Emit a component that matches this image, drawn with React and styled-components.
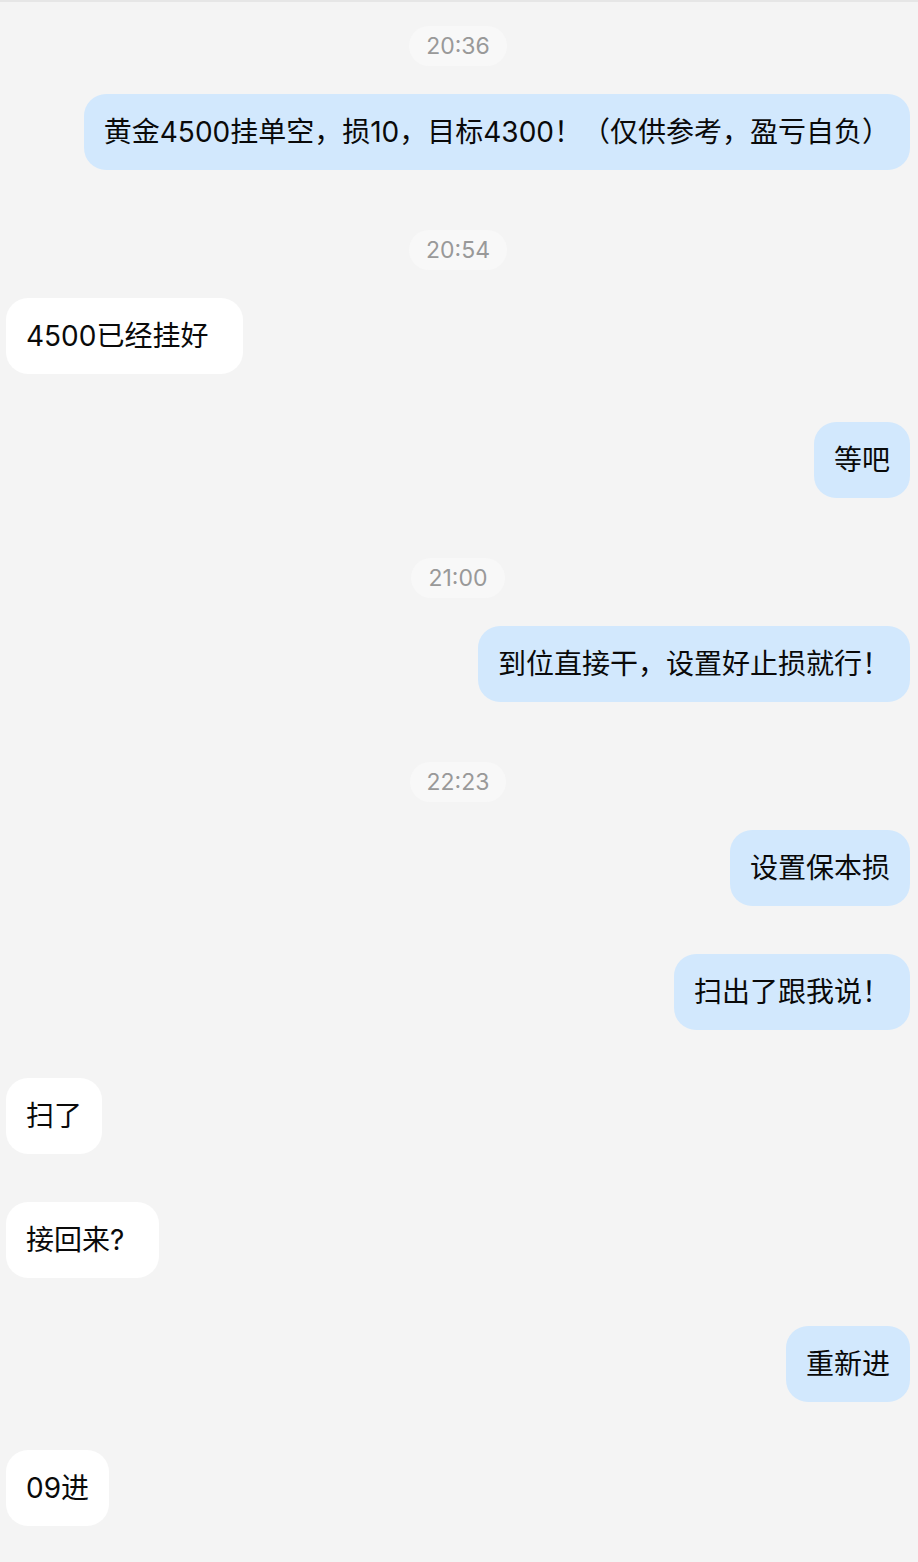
import React from "react";
import styled, { createGlobalStyle } from "styled-components";

const GlobalStyle = createGlobalStyle`
  html, body {
    margin: 0;
    padding: 0;
    background: #f4f4f4;
  }
  body {
    font-family: Inter, "Noto Sans CJK SC", "Noto Sans", sans-serif;
    -webkit-font-smoothing: antialiased;
  }
`;

// trailing: message text ended with extra blank space in the original
const messages = [
  { type: "time", text: "20:36" },
  { type: "msg", mine: true, text: "黄金4500挂单空，损10，目标4300！（仅供参考，盈亏自负）" },
  { type: "time", text: "20:54" },
  { type: "msg", mine: false, text: "4500已经挂好", trailing: true },
  { type: "msg", mine: true, text: "等吧" },
  { type: "time", text: "21:00" },
  { type: "msg", mine: true, text: "到位直接干，设置好止损就行！" },
  { type: "time", text: "22:23" },
  { type: "msg", mine: true, text: "设置保本损" },
  { type: "msg", mine: true, text: "扫出了跟我说！" },
  { type: "msg", mine: false, text: "扫了" },
  { type: "msg", mine: false, text: "接回来?", trailing: true },
  { type: "msg", mine: true, text: "重新进" },
  { type: "msg", mine: false, text: "09进" },
];

export default function App() {
  return (
    <>
      <GlobalStyle />
      <ChatPage>
        {messages.map((item, i) =>
          item.type === "time" ? (
            <TimeRow key={i}>
              <TimePill>{item.text}</TimePill>
            </TimeRow>
          ) : (
            <MessageRow key={i} $mine={item.mine}>
              <Bubble $mine={item.mine} $trailing={item.trailing}>
                {item.text}
              </Bubble>
            </MessageRow>
          )
        )}
      </ChatPage>
    </>
  );
}

const ChatPage = styled.div`
  display: flex;
  flex-direction: column;
  min-height: 1562px;
  border-top: 2px solid #e6e6e6;
  padding: 0 8px 0 6px;
  box-sizing: border-box;
  background: #f4f4f4;
`;

const MessageRow = styled.div`
  display: flex;
  justify-content: ${(p) => (p.$mine ? "flex-end" : "flex-start")};
  padding: 24px 0;
`;

const TimeRow = styled.div`
  display: flex;
  justify-content: center;
  padding: 24px 0 4px;

  ${MessageRow} + & {
    padding-top: 36px;
  }
`;

const TimePill = styled.div`
  height: 40px;
  line-height: 41px;
  padding: 0 17px;
  border-radius: 20px;
  background: #f8f8f8;
  color: #999999;
  font-size: 23px;
`;

const Bubble = styled.div`
  height: 76px;
  line-height: 76px;
  padding: 0 ${(p) => (p.$trailing ? "35px" : "20px")} 0 20px;
  box-sizing: border-box;
  border-radius: 22px;
  background: ${(p) => (p.$mine ? "#d2e8fd" : "#ffffff")};
  color: #0a0a0a;
  font-size: 28px;
  white-space: nowrap;
`;
